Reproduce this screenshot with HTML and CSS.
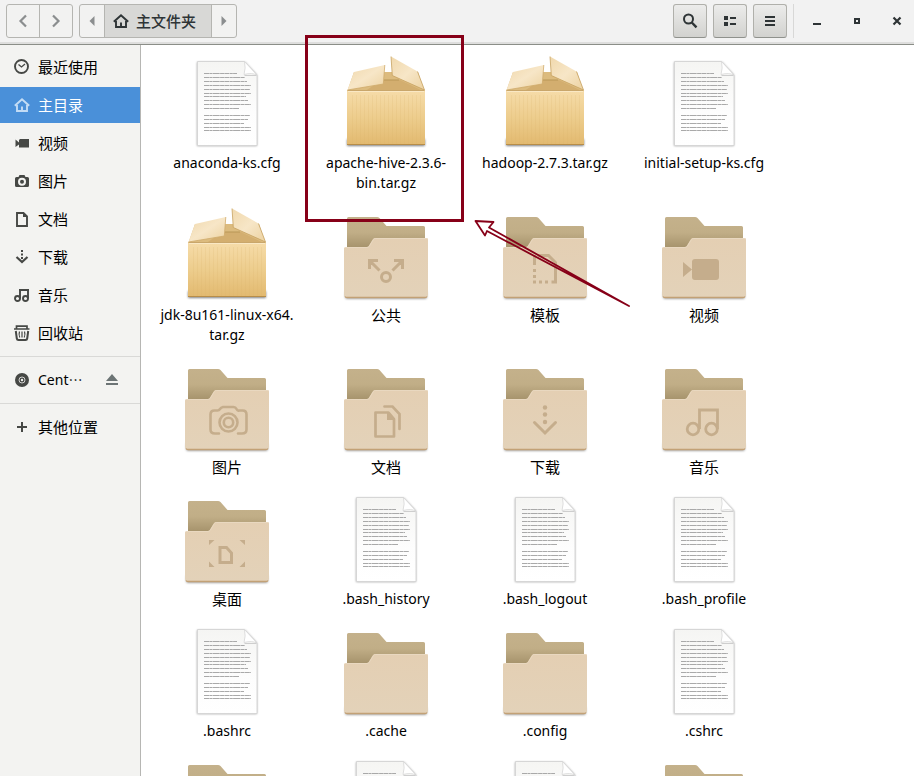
FILE: index.html
```html
<!DOCTYPE html>
<html lang="zh-CN">
<head>
<meta charset="utf-8">
<meta name="viewport" content="width=device-width, initial-scale=1">
<title>主文件夹</title>
<link rel="stylesheet" href="styles.css">
</head>
<body>
<svg class="sprites" aria-hidden="true">
  <defs>
    <linearGradient id="back-fill" x1="0" y1="0" x2="0" y2="1">
      <stop offset="0" stop-color="#c4b18b"/><stop offset="0.45" stop-color="#c1ae87"/><stop offset="1" stop-color="#a08d66"/>
    </linearGradient>
    <linearGradient id="front-fill" x1="0" y1="0" x2="0" y2="1">
      <stop offset="0" stop-color="#e4cfb3"/><stop offset="1" stop-color="#e3d2b9"/>
    </linearGradient>
    <linearGradient id="box-fill" x1="0" y1="0" x2="0" y2="1">
      <stop offset="0" stop-color="#f6dca9"/><stop offset="0.5" stop-color="#edcd8d"/><stop offset="1" stop-color="#e2b96f"/>
    </linearGradient>
    <linearGradient id="flap-fill" x1="0" y1="0" x2="1" y2="1">
      <stop offset="0" stop-color="#f0d8ac"/><stop offset="0.5" stop-color="#f7e6c7"/><stop offset="1" stop-color="#ecd2a1"/>
    </linearGradient>
    <linearGradient id="page-fill" x1="0" y1="0" x2="0" y2="1">
      <stop offset="0" stop-color="#f5f5f3"/><stop offset="0.6" stop-color="#fdfdfd"/><stop offset="1" stop-color="#fff"/>
    </linearGradient>
    <filter id="soft" x="-10%" y="-50%" width="120%" height="200%"><feGaussianBlur stdDeviation="1"/></filter>
  </defs>

  <symbol id="folder" viewBox="0 0 96 96">
    <rect x="7" y="86" width="82" height="8" rx="2" fill="#000" opacity=".35" filter="url(#soft)"/>
    <path d="M9 46V13.500Q9 12 10.500 12H39q1.500 0 2.500 1l7 8H85.500Q87 21 87 22.500V46z" fill="url(#back-fill)"/>
    <path d="M6 90V43.500Q6 42 7.500 42H28.500q1.500 0 2.200-1l4.300-7q.8-1 2-1H88.500Q90 33 90 34.500V90q-.5 3-3 3H9q-2.500 0-3-3z" fill="url(#front-fill)"/>
    <path d="M7 42.500H29q1.500 0 2.200-1l4.300-7q.8-1 2-1H89.500" fill="none" stroke="#e9d8c0" stroke-width="1"/>
    <path d="M7 91.500Q7.500 92.500 9 92.500H87q1.500 0 2-1" fill="none" stroke="#c2a176" stroke-width="1.300"/>
  </symbol>

  <symbol id="package" viewBox="0 0 96 96">
    <rect x="9" y="86" width="78" height="7" rx="1" fill="#000" opacity=".5" filter="url(#soft)"/>
    <path d="M16 19H80L86 37.500H9.500z" fill="#dcbb7e"/>
    <path d="M44 27H62L84 37.500H28z" fill="#d3ae6f"/>
    <path d="M46 27H61" stroke="#b99656" stroke-width="1"/>
    <rect x="9" y="37" width="78" height="55" fill="url(#box-fill)"/>
    <g stroke="#d9b168" stroke-width="1" opacity=".16">
      <path d="M14.500 42V91M18.500 42V91M22.500 42V91M26.500 42V91M30.500 42V91M34.500 42V91M38.500 42V91M42.500 42V91M46.500 42V91M50.500 42V91M54.500 42V91M58.500 42V91M62.500 42V91M66.500 42V91M70.500 42V91M74.500 42V91M78.500 42V91M82.500 42V91"/>
    </g>
    <path d="M9.500 37.500H86.500" stroke="#bf9a5c" stroke-width="1" opacity=".8"/>
    <path d="M10 38.500H86" stroke="#fae8c4" stroke-width="1"/>
    <path d="M9 91.500H87" stroke="#b78d48" stroke-width="1"/>
    <path d="M9.500 37L16 19L46.800 12L45.300 31z" fill="url(#flap-fill)"/>
    <path d="M9.500 37L45.300 31L46.800 12" fill="none" stroke="#cfab6c" stroke-width=".8"/>
    <path d="M53 3.500L79.500 18.500L86.500 37L54.300 22.500z" fill="url(#flap-fill)"/>
    <path d="M53 3.500L54.300 22.500L86.500 37L79.500 18.500" fill="none" stroke="#c7a15f" stroke-width=".8"/>
  </symbol>

  <symbol id="document" viewBox="0 0 96 96">
    <path d="M18 9H66L78 22V93H18z" fill="#000" opacity=".35" filter="url(#soft)"/>
    <path d="M18.500 8.500H65.500L78 22V92.500H18.500z" fill="url(#page-fill)" stroke="#d6d6d6" stroke-width="1"/>
    <path d="M65.500 8.500Q67 15 65 21.500Q73 19.500 78 22z" fill="#fff" stroke="#d6d6d6" stroke-width=".8"/>
    <path d="M65.500 22.500H77.500" stroke="#cecece" stroke-width="1"/>
    <g stroke="#a9a9a9" stroke-width="1" stroke-dasharray="5 .4 3 .3 7 .4 4 .3">
      <path d="M25 20.500H58M25 24.500H66M25 28.500H68M25 32.500H72M25 36.500H71M25 40.500H72M25 43.500H67M25 47.500H69M25 51.500H72M25 55.500H60"/>
      <path d="M25 62.500H71M25 66.500H69M25 70.500H65M25 74.500H72M25 77.500H72"/>
    </g>
  </symbol>

  <symbol id="emblem-public" viewBox="0 0 96 96">
    <g fill="none" stroke="#c5ad8c" stroke-width="3"><circle cx="48" cy="72" r="4.500"/>
    <path d="M40 55.500H31.500V64M32 56L41.500 65.500M56 55.500H64.500V64M64 56L54.500 65.500"/></g>
  </symbol>
  <symbol id="emblem-template" viewBox="0 0 96 96">
    <g fill="none" stroke="#c5ad8c" stroke-width="3"><path d="M37.500 60V50M41 50.500H51.500L58.500 57.500V77H54.500"/>
    <path d="M36 65.500H39M36 71.500H39M36 77H39M42 77H45M48 77H51"/></g>
  </symbol>
  <symbol id="emblem-video" viewBox="0 0 96 96">
    <path d="M39 54H60q3 0 3 3V72q0 3-3 3H39q-3 0-3-3V57q0-3 3-3zM27 57L36 64.500L27 72z" fill="#c5ad8c"/>
  </symbol>
  <symbol id="emblem-camera" viewBox="0 0 96 96">
    <g fill="none" stroke="#c5ad8c" stroke-width="2.600"><path d="M40 76.500H36q-4.500 0-4.500-4V57.500q0-4 4-4H38.500q1.500 0 2.500-1.500t3-2H54.500q2 0 3 2t2.500 1.500H63.500q4 0 4 4V72.500q0 4-4.500 4H59" stroke-linecap="round"/>
    <circle cx="49.500" cy="65.500" r="9"/><circle cx="49.500" cy="65.500" r="4.700"/></g>
  </symbol>
  <symbol id="emblem-documents" viewBox="0 0 96 96">
    <g fill="none" stroke="#c5ad8c" stroke-width="2.700"><path d="M37.500 55.500H50.500L56 62V79.500H37.500z" stroke-linejoin="round"/>
    <path d="M46.500 49.500H54.500L61.500 57V72" stroke-linecap="round"/></g>
    <path d="M49 55L57 63H49z" fill="#c5ad8c"/>
  </symbol>
  <symbol id="emblem-download" viewBox="0 0 96 96">
    <g fill="#c5ad8c"><circle cx="48" cy="50.500" r="2.200"/><circle cx="48" cy="57.500" r="2.200"/><circle cx="48" cy="65" r="2.200"/></g>
    <path d="M37.500 65.500L48 76L58.500 65.500" fill="none" stroke="#c5ad8c" stroke-width="3" stroke-linecap="round"/>
  </symbol>
  <symbol id="emblem-music" viewBox="0 0 96 96">
    <g fill="none" stroke="#c5ad8c" stroke-width="2.800"><circle cx="37" cy="72" r="5.800"/><circle cx="55.500" cy="72" r="5.800"/>
    <path d="M43.500 72V53H61.500V72"/></g>
  </symbol>
  <symbol id="emblem-desktop" viewBox="0 0 96 96">
    <path d="M41 58.500H47.500L52.500 64V73.500H41z" fill="none" stroke="#c5ad8c" stroke-width="3"/>
    <path d="M30 51H35.500L30 56zM66 51H60.500L66 56zM30 78H35.500L30 72.500zM66 78H60.500L66 72.500z" fill="#c5ad8c"/>
  </symbol>

  <symbol id="home" viewBox="0 0 16 16">
    <path d="M.8 8.700L8 2.300L15.200 8.700" fill="none" stroke="currentColor" stroke-width="2"/>
    <path d="M3 8V14H13V8M8 14.500V9.500" fill="none" stroke="currentColor" stroke-width="1.900"/>
  </symbol>
</svg>

<header class="headerbar">
  <div class="linked">
    <button class="nav" aria-label="后退"><svg class="i16" viewBox="0 0 16 16"><path d="M11 2.500L5.500 8L11 13.500" fill="none" stroke="currentColor" stroke-width="2.200"/></svg></button>
    <button class="nav" aria-label="前进"><svg class="i16" viewBox="0 0 16 16"><path d="M5 2.500L10.500 8L5 13.500" fill="none" stroke="currentColor" stroke-width="2.200"/></svg></button>
  </div>
  <div class="linked">
    <button class="step" aria-label="向左"><svg class="i16" viewBox="0 0 16 16"><path d="M10.500 3V13L5.500 8z" fill="currentColor"/></svg></button>
    <button class="crumb"><svg class="i16"><use href="#home"/></svg>主文件夹</button>
    <button class="step" aria-label="向右"><svg class="i16" viewBox="0 0 16 16"><path d="M5.500 3V13L10.500 8z" fill="currentColor"/></svg></button>
  </div>
  <div class="tools">
    <button class="tool" aria-label="搜索"><svg class="i16" viewBox="0 0 16 16"><circle cx="6.500" cy="6" r="4.500" fill="none" stroke="currentColor" stroke-width="2"/><path d="M9.800 9.500L14.500 14.300" stroke="currentColor" stroke-width="2.400"/></svg></button>
    <button class="tool" aria-label="查看"><svg class="i16" viewBox="0 0 16 16"><path d="M2 3H6V7H2zM8 4H14V6H8zM2 9H6V13H2zM8 10H14V12H8z" fill="currentColor"/></svg></button>
    <button class="tool" aria-label="菜单"><svg class="i16" viewBox="0 0 16 16"><path d="M3 3H13V5H3zM3 7H13V9H3zM3 11H13V13H3z" fill="currentColor"/></svg></button>
  </div>
  <div class="window-controls">
    <button class="control" aria-label="最小化"><svg class="i16" viewBox="0 0 16 16"><path d="M4 10H12V12H4z" fill="currentColor"/></svg></button>
    <button class="control" aria-label="最大化"><svg class="i16" viewBox="0 0 16 16"><path d="M6 6H10V10H6z" fill="none" stroke="currentColor" stroke-width="2"/></svg></button>
    <button class="control" aria-label="关闭"><svg class="i16" viewBox="0 0 16 16"><path d="M4.500 4.500L11.500 11.500M11.500 4.500L4.500 11.500" stroke="currentColor" stroke-width="2.200"/></svg></button>
  </div>
</header>

<div class="window-body">
  <nav class="sidebar">
    <ul class="places">
      <li><a class="place" href="#"><svg class="i16" viewBox="0 0 16 16"><circle cx="7.500" cy="7.500" r="6.500" fill="none" stroke="currentColor" stroke-width="1.900"/><path d="M4.500 5.500L7.500 8L11 5" fill="none" stroke="currentColor" stroke-width="1.300"/></svg>最近使用</a></li>
      <li><a class="place selected" href="#" aria-current="page"><svg class="i16"><use href="#home"/></svg>主目录</a></li>
      <li><a class="place" href="#"><svg class="i16" viewBox="0 0 16 16"><path d="M6 4H15V12.500H5V9.500L1.500 12V4.500L5 7.500V5z" fill="currentColor"/></svg>视频</a></li>
      <li><a class="place" href="#"><svg class="i16" viewBox="0 0 16 16"><path fill-rule="evenodd" d="M5.500 2H10.500L11.500 4H13.500Q15 4 15 5.500V12.500Q15 14 13.500 14H2.500Q1 14 1 12.500V5.500Q1 4 2.500 4H4.500zM8 4.800A4 4 0 1 0 8 12.800A4 4 0 1 0 8 4.800z" fill="currentColor"/><circle cx="8" cy="8.800" r="2" fill="currentColor"/></svg>图片</a></li>
      <li><a class="place" href="#"><svg class="i16" viewBox="0 0 16 16"><path d="M3 2H9.500L13 5.500V15H3z" fill="none" stroke="currentColor" stroke-width="1.900"/><path d="M9 1.500V6H13z" fill="currentColor"/></svg>文档</a></li>
      <li><a class="place" href="#"><svg class="i16" viewBox="0 0 16 16"><path d="M7 1H9V3H7zM7 4.500H9V6.500H7zM7 8H9V10H7z" fill="currentColor"/><path d="M2.500 8L8 13L13.500 8" fill="none" stroke="currentColor" stroke-width="2.200"/></svg>下载</a></li>
      <li><a class="place" href="#"><svg class="i16" viewBox="0 0 16 16"><g fill="none" stroke="currentColor" stroke-width="1.900"><circle cx="3.500" cy="11.500" r="2.500"/><circle cx="11.500" cy="11.500" r="2.500"/><path d="M6 11.500V3H14V11.500"/></g><path d="M5 2H15V4H5z" fill="currentColor"/></svg>音乐</a></li>
      <li><a class="place" href="#"><svg class="i16" viewBox="0 0 16 16"><g fill="none" stroke="currentColor"><path d="M0 4H15.500M2.500 3.500V1.200H13V3.500" stroke-width="1.700"/><path d="M1.800 6L2.800 13.500Q3 15 4.500 15H11.500Q13 15 13.200 13.500L14.200 6" stroke-width="2"/><path d="M5.500 6.500Q4.500 9.500 5.800 12.500M10.500 6.500Q11.500 9.500 10.200 12.500M8 6.500V12.500" stroke-width="1.200"/></g></svg>回收站</a></li>
    </ul>
    <ul class="places">
      <li class="mount"><a class="place" href="#"><svg class="i16" viewBox="0 0 16 16"><circle cx="8" cy="8" r="7" fill="currentColor"/><circle cx="8" cy="8" r="3" fill="none" stroke="#f3f3f1" stroke-width=".8"/><circle cx="8" cy="8" r="1.200" fill="#f3f3f1"/></svg><span>Cent⋯</span></a><button class="eject" aria-label="弹出"><svg class="i16" viewBox="0 0 16 16"><path d="M8 2L14 9H2zM2 11H14V13H2z" fill="currentColor"/></svg></button></li>
    </ul>
    <ul class="places">
      <li><a class="place" href="#"><svg class="i16" viewBox="0 0 16 16"><path d="M7 3H9V7H13V9H9V13H7V9H3V7H7z" fill="currentColor"/></svg>其他位置</a></li>
    </ul>
  </nav>

  <main class="files">
    <ul class="grid">
      <li class="file"><svg class="i96"><use href="#document"/></svg><span class="name">anaconda-ks.cfg</span></li>
      <li class="file"><svg class="i96"><use href="#package"/></svg><span class="name">apache-hive-2.3.6-bin.tar.gz</span>
        <svg class="callout" viewBox="0 0 326 273" aria-hidden="true">
          <rect x="1.500" y="1.500" width="156" height="184" fill="none" stroke="#870018" stroke-width="3"/>
          <path d="M170.500 186L188.500 187L184 192.500L324 271L182 196L180 200.500z" fill="none" stroke="#870018" stroke-width="1.800" stroke-linejoin="round"/>
        </svg></li>
      <li class="file"><svg class="i96"><use href="#package"/></svg><span class="name">hadoop-2.7.3.tar.gz</span></li>
      <li class="file"><svg class="i96"><use href="#document"/></svg><span class="name">initial-setup-ks.cfg</span></li>
      <li class="file"><svg class="i96"><use href="#package"/></svg><span class="name">jdk-8u161-linux-x64.<wbr>tar.gz</span></li>
      <li class="file"><svg class="i96"><use href="#folder"/><use href="#emblem-public"/></svg><span class="name hanzi">公共</span></li>
      <li class="file"><svg class="i96"><use href="#folder"/><use href="#emblem-template"/></svg><span class="name hanzi">模板</span></li>
      <li class="file"><svg class="i96"><use href="#folder"/><use href="#emblem-video"/></svg><span class="name hanzi">视频</span></li>
      <li class="file"><svg class="i96"><use href="#folder"/><use href="#emblem-camera"/></svg><span class="name hanzi">图片</span></li>
      <li class="file"><svg class="i96"><use href="#folder"/><use href="#emblem-documents"/></svg><span class="name hanzi">文档</span></li>
      <li class="file"><svg class="i96"><use href="#folder"/><use href="#emblem-download"/></svg><span class="name hanzi">下载</span></li>
      <li class="file"><svg class="i96"><use href="#folder"/><use href="#emblem-music"/></svg><span class="name hanzi">音乐</span></li>
      <li class="file"><svg class="i96"><use href="#folder"/><use href="#emblem-desktop"/></svg><span class="name hanzi">桌面</span></li>
      <li class="file"><svg class="i96"><use href="#document"/></svg><span class="name">.bash_history</span></li>
      <li class="file"><svg class="i96"><use href="#document"/></svg><span class="name">.bash_logout</span></li>
      <li class="file"><svg class="i96"><use href="#document"/></svg><span class="name">.bash_profile</span></li>
      <li class="file"><svg class="i96"><use href="#document"/></svg><span class="name">.bashrc</span></li>
      <li class="file"><svg class="i96"><use href="#folder"/></svg><span class="name">.cache</span></li>
      <li class="file"><svg class="i96"><use href="#folder"/></svg><span class="name">.config</span></li>
      <li class="file"><svg class="i96"><use href="#document"/></svg><span class="name">.cshrc</span></li>
      <li class="file"><svg class="i96"><use href="#folder"/></svg></li>
      <li class="file"><svg class="i96"><use href="#document"/></svg></li>
      <li class="file"><svg class="i96"><use href="#document"/></svg></li>
      <li class="file"><svg class="i96"><use href="#folder"/></svg></li>
    </ul>
  </main>
</div>
</body>
</html>
```
FILE: styles.css
```css
* {
  box-sizing: border-box;
}

body {
  display: flex;
  flex-direction: column;
  height: 100vh;
  margin: 0;
  overflow: hidden;
  background: #fff;
  color: #000;
  font: 14px/20px "Noto Sans", "Noto Sans CJK SC", sans-serif;
}

button {
  display: flex;
  align-items: center;
  justify-content: center;
  margin: 0;
  padding: 0;
  border: 0;
  background: none;
  color: inherit;
  font: inherit;
}

ul {
  margin: 0;
  padding: 0;
  list-style: none;
}

.sprites {
  position: absolute;
  width: 0;
  height: 0;
}

.i16 {
  flex: none;
  width: 16px;
  height: 16px;
}

.i96 {
  flex: none;
  width: 96px;
  height: 96px;
}

/* Header bar */

.headerbar {
  display: flex;
  flex: none;
  align-items: center;
  gap: 6px;
  padding: 4px 5px 6px 6px;
  border-bottom: 1px solid #8b8e88;
  background: #f2f2f2;
  box-shadow: inset 0 -2px #dededd;
  color: #2e3436;
}

.linked {
  display: flex;
  border: 1px solid #b5b5b1;
  border-radius: 3px;
  background: #f2f2f1;
}

.linked button {
  height: 32px;
}

.linked button + button {
  border-left: 1px solid #b5b5b1;
}

.nav,
.step {
  color: #8b8e8f;
}

.nav {
  width: 32px;
}

.nav + .nav {
  width: 33px;
}

.step {
  width: 24px;
}

.crumb + .step {
  width: 25px;
}

.linked .crumb {
  gap: 7px;
  padding: 0 15px 0 8px;
  background: #d8d8d6;
  font-size: 15px;
  font-weight: 500;
}

.tools {
  display: flex;
  gap: 6px;
  margin-left: auto;
}

.tool {
  width: 34px;
  height: 34px;
  border: 1px solid #b0b0ab;
  border-bottom-color: #8f918c;
  border-radius: 3px;
  background: linear-gradient(#ececeb, #d2d2cf);
}

.window-controls {
  display: flex;
  gap: 16px;
  padding: 5px 0 5px 11px;
  border-left: 1px solid #d8d8d7;
}

.control {
  width: 24px;
  height: 24px;
}

/* Sidebar */

.window-body {
  display: flex;
  flex: 1;
  min-height: 0;
}

.sidebar {
  flex: none;
  width: 141px;
  padding-top: 4px;
  border-right: 1px solid #b6b6b3;
  background: #f3f3f1;
}

.places {
  display: grid;
  gap: 2px;
}

.places + .places {
  margin-top: 5px;
  padding-top: 5px;
  border-top: 1px solid #d9d9d7;
}

.place {
  display: flex;
  flex: 1;
  align-items: center;
  gap: 8px;
  height: 36px;
  padding-left: 14px;
  color: #000;
  font-size: 15px;
  text-decoration: none;
}

.place svg {
  color: #464845;
}

.place span {
  font-size: 14px;
}

.selected {
  background: #4a90d9;
  color: #fff;
}

.selected svg {
  color: #c3dcf5;
}

.mount {
  display: flex;
  align-items: center;
}

.eject {
  width: 32px;
  margin-right: 12px;
  color: #6c7475;
}

/* Icon view */

.files {
  flex: 1;
  min-width: 0;
  padding: 8px 0 0 7px;
}

.grid {
  display: grid;
  grid-template-columns: repeat(auto-fill, 158px);
  gap: 12px 1px;
}

.file {
  position: relative;
  display: flex;
  flex-direction: column;
  align-items: center;
  gap: 4px;
}

.name {
  max-width: 140px;
  text-align: center;
}

.hanzi {
  font-size: 15px;
}

/* Frame and arrow drawn over the icon view */

.callout {
  position: absolute;
  top: -18px;
  left: -2px;
  z-index: 1;
  width: 326px;
  height: 273px;
}
```
